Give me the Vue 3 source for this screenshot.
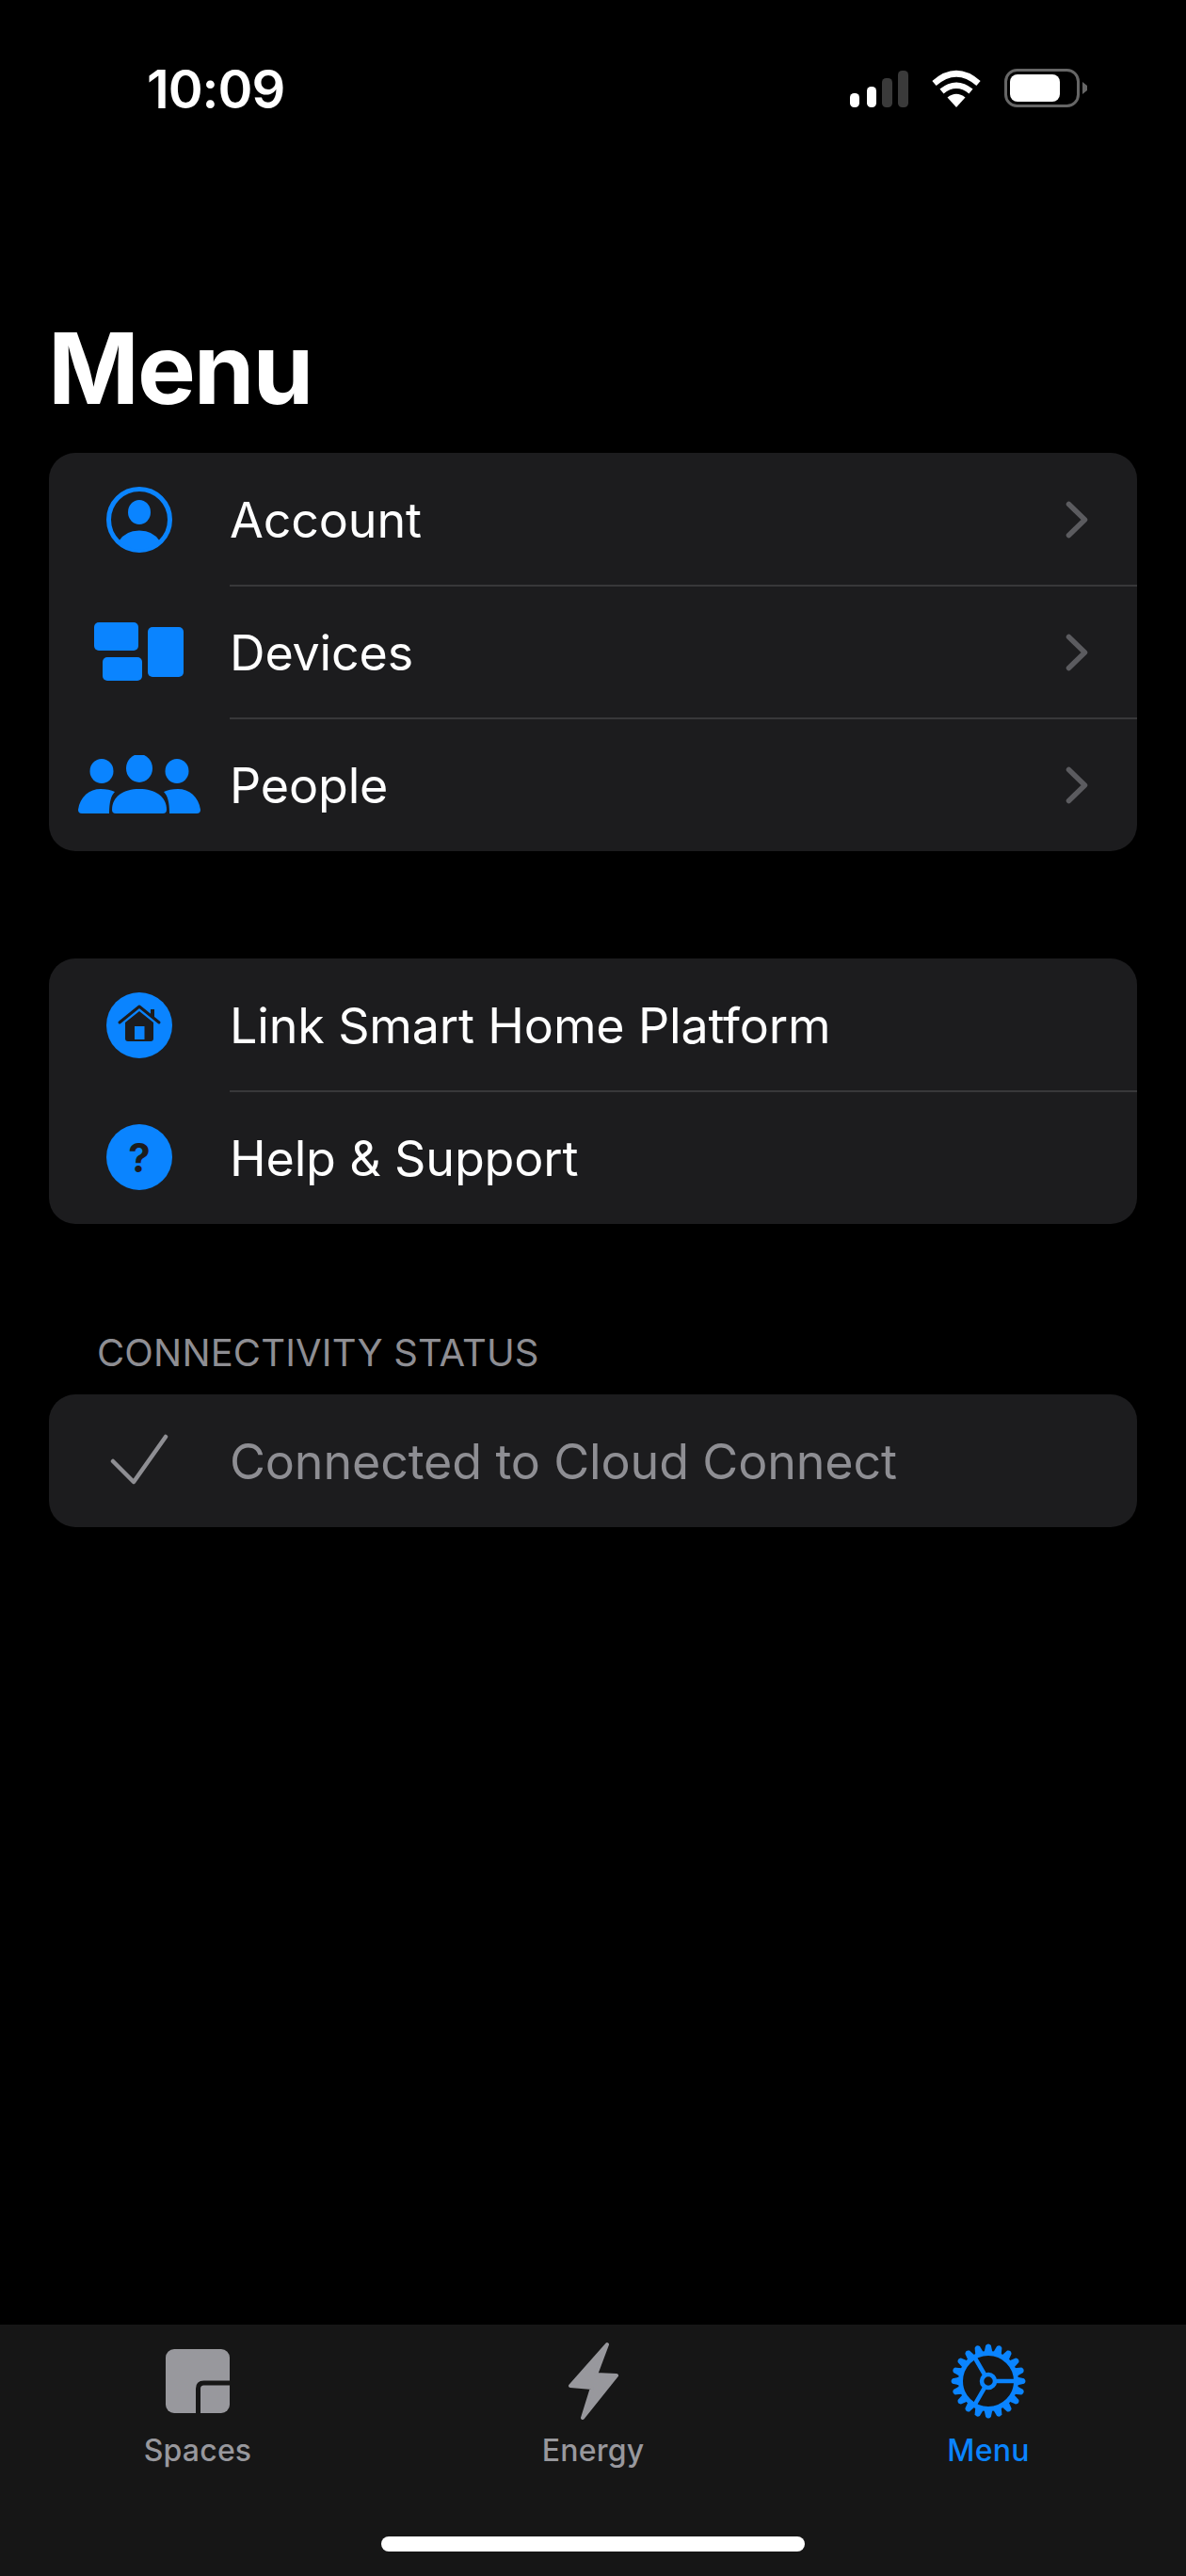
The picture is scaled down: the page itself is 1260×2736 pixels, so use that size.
<script setup>
const accountRows = [
  { key: 'account', label: 'Account' },
  { key: 'devices', label: 'Devices' },
  { key: 'people', label: 'People' },
]

const supportRows = [
  { key: 'home', label: 'Link Smart Home Platform' },
  { key: 'help', label: 'Help & Support' },
]

const tabs = [
  { key: 'spaces', label: 'Spaces' },
  { key: 'energy', label: 'Energy' },
  { key: 'menu', label: 'Menu', active: true },
]
</script>

<template>
  <div class="screen">
    <header class="status-bar">
      <span class="status-bar__time">10:09</span>
      <div class="status-bar__icons">
        <svg class="signal" width="62" height="39" viewBox="0 0 62 39" aria-hidden="true">
          <rect x="0" y="24" width="10" height="15" rx="4.5" fill="#fff" />
          <rect x="18" y="17" width="10" height="22" rx="4.5" fill="#fff" />
          <rect x="34" y="8" width="11" height="31" rx="4.5" fill="#3a3a3a" />
          <rect x="51" y="0" width="11" height="39" rx="4.5" fill="#3a3a3a" />
        </svg>
        <svg class="wifi" width="54" height="40" viewBox="0 0 54 40" aria-hidden="true">
          <path d="M27 40 L17.5 29.5 Q27 22 36.5 29.5 Z" fill="#fff" />
          <path d="M11.5 23 Q27 10.5 42.5 23" fill="none" stroke="#fff" stroke-width="6.5" />
          <path d="M3.5 14.5 Q27 -6 50.5 14.5" fill="none" stroke="#fff" stroke-width="6.5" />
        </svg>
        <svg class="battery" width="89" height="41" viewBox="0 0 89 41" aria-hidden="true">
          <rect x="1.5" y="1.5" width="77" height="38" rx="12" fill="none" stroke="#666" stroke-width="3" />
          <rect x="6" y="6" width="53" height="29" rx="8" fill="#fff" />
          <path d="M83 14 L88 18 V23 L83 27 Z" fill="#666" />
        </svg>
      </div>
    </header>

    <main class="content">
      <h1 class="content__title">Menu</h1>

      <ul class="card">
        <li v-for="row in accountRows" :key="row.key" class="row">
          <span class="row__icon">
            <svg v-if="row.key === 'account'" width="70" height="70" viewBox="0 0 70 70" aria-hidden="true">
              <circle cx="35" cy="35" r="32.5" fill="none" stroke="#0a84ff" stroke-width="5" />
              <ellipse cx="35" cy="27" rx="12" ry="13" fill="#0a84ff" />
              <path d="M13 58 Q20 46.5 35 46.5 Q50 46.5 57 58 A32.5 32.5 0 0 1 13 58 Z" fill="#0a84ff" />
            </svg>
            <svg v-else-if="row.key === 'devices'" width="96" height="62" viewBox="0 0 96 62" aria-hidden="true">
              <rect x="0" y="0" width="47" height="30" rx="5" fill="#0a84ff" />
              <rect x="9" y="37" width="42" height="25" rx="5" fill="#0a84ff" />
              <rect x="57" y="5" width="38" height="53" rx="5" fill="#0a84ff" />
            </svg>
            <svg v-else width="130" height="62" viewBox="0 0 130 62" aria-hidden="true">
              <ellipse cx="25" cy="17" rx="12.5" ry="13" fill="#0a84ff" />
              <ellipse cx="105" cy="17" rx="12.5" ry="13" fill="#0a84ff" />
              <ellipse cx="65" cy="14" rx="14" ry="15" fill="#0a84ff" />
              <path d="M0 58 C2 44 12 36 24 36 Q33 36 39 39 C35 43 33 50 33 62 H4 Q0 62 0 58 Z" fill="#0a84ff" />
              <path d="M130 58 C128 44 118 36 106 36 Q97 36 91 39 C95 43 97 50 97 62 H126 Q130 62 130 58 Z" fill="#0a84ff" />
              <path d="M36 58 C36 44 48 36 65 36 C82 36 94 44 94 58 Q94 62 90 62 H40 Q36 62 36 58 Z" fill="#0a84ff" />
            </svg>
          </span>
          <span class="row__body">
            <span class="row__label">{{ row.label }}</span>
            <svg class="row__chevron" width="24" height="40" viewBox="0 0 24 40" aria-hidden="true">
              <path d="M3.5 3.5 L20.5 20 L3.5 36.5" fill="none" stroke="#5b5b5f" stroke-width="5.5" stroke-linecap="round" stroke-linejoin="round" />
            </svg>
          </span>
        </li>
      </ul>

      <ul class="card card--support">
        <li v-for="row in supportRows" :key="row.key" class="row">
          <span class="row__icon">
            <span v-if="row.key === 'help'" class="help-badge">?</span>
            <svg v-else width="70" height="70" viewBox="13 13 70 70" aria-hidden="true">
              <circle cx="48" cy="48" r="35" fill="#0a84ff" />
              <path d="M33 45 L48 33 L63 45 V62 Q63 65 60 65 H36 Q33 65 33 62 Z" fill="#1c1c1e" />
              <path d="M27 45 L48 28 L69 45" fill="none" stroke="#1c1c1e" stroke-width="3" stroke-linecap="round" stroke-linejoin="round" />
              <rect x="60" y="31" width="4" height="9" fill="#1c1c1e" />
              <rect x="43" y="49" width="10.5" height="14" fill="#0a84ff" />
            </svg>
          </span>
          <span class="row__body">
            <span class="row__label">{{ row.label }}</span>
          </span>
        </li>
      </ul>

      <h2 class="section-label">CONNECTIVITY STATUS</h2>
      <div class="card">
        <div class="row row--status">
          <span class="row__icon">
            <svg width="62" height="60" viewBox="0 0 62 60" aria-hidden="true">
              <path d="M3 30 L25 52 L59 4" fill="none" stroke="#8e8e93" stroke-width="4.5" stroke-linecap="round" stroke-linejoin="round" />
            </svg>
          </span>
          <span class="row__body">
            <span class="row__label row__label--muted">Connected to Cloud Connect</span>
          </span>
        </div>
      </div>
    </main>

    <nav class="tabs">
      <div
        v-for="tab in tabs"
        :key="tab.key"
        class="tabs__item"
        :class="{ 'tabs__item--active': tab.active }"
      >
        <span class="tabs__icon">
          <svg v-if="tab.key === 'spaces'" width="68" height="68" viewBox="0 0 68 68" aria-hidden="true">
            <rect width="68" height="68" rx="9" fill="#98989d" />
            <path d="M34.5 68 V42 Q34.5 36 40.5 36 H68" fill="none" stroke="#161616" stroke-width="5" />
          </svg>
          <svg v-else-if="tab.key === 'energy'" width="56" height="84" viewBox="0 0 56 84" aria-hidden="true">
            <path d="M43 3 L4 47 L27 49 L17 81 L53 36 L31 35 Z" fill="#98989d" stroke="#98989d" stroke-width="4" stroke-linejoin="round" />
          </svg>
          <svg v-else width="84" height="84" viewBox="-42 -42 84 84" aria-hidden="true">
            <path
              v-for="n in 20"
              :key="n"
              d="M28 -5 L38 -2.8 Q41 0 38 2.8 L28 5 Z"
              fill="#0a84ff"
              :transform="`rotate(${n * 18})`"
            />
            <circle r="29.5" fill="none" stroke="#0a84ff" stroke-width="5" />
            <circle r="7" fill="none" stroke="#0a84ff" stroke-width="4.5" />
            <path d="M8 0 H30 M-4 -7 L-15 -26 M-4 7 L-15 26" fill="none" stroke="#0a84ff" stroke-width="4.5" />
          </svg>
        </span>
        <span class="tabs__label">{{ tab.label }}</span>
      </div>
      <span class="tabs__home-bar"></span>
    </nav>
  </div>
</template>

<style scoped>
.screen {
  display: flex;
  flex-direction: column;
  width: 1260px;
  height: 2736px;
  background: #000;
  color: #fff;
  font-family: Inter, "Liberation Sans", sans-serif;
  overflow: hidden;
}

.status-bar {
  display: flex;
  align-items: flex-start;
  justify-content: space-between;
  height: 140px;
  flex-shrink: 0;
  box-sizing: border-box;
  padding: 65px 104px 0 156px;
}

.status-bar__time {
  font-size: 56px;
  line-height: 60px;
  font-weight: 600;
  letter-spacing: -1px;
}

.status-bar__icons {
  display: flex;
  align-items: flex-end;
  gap: 24px;
  padding-top: 8px;
}

.content {
  flex: 1;
  padding: 0 52px;
}

.content__title {
  height: 150px;
  margin: 191px 0 0 -1px;
  font-size: 104px;
  line-height: 120px;
  font-weight: 700;
  letter-spacing: -2px;
}

.card {
  margin: 0;
  padding: 0;
  list-style: none;
  background: #1c1c1e;
  border-radius: 28px;
  overflow: hidden;
}

.card--support {
  margin-top: 114px;
}

.section-label {
  height: 69px;
  margin: 112px 0 0 0;
  padding-left: 51px;
  font-size: 40px;
  line-height: 50px;
  font-weight: 400;
  letter-spacing: 0.15px;
  color: #8e8e93;
}

.row {
  display: flex;
  height: 141px;
}

.row + .row {
  height: 142px;
  margin-top: -1px;
}

.row__icon {
  display: flex;
  align-items: center;
  justify-content: center;
  width: 192px;
  flex-shrink: 0;
}

.row__body {
  display: flex;
  align-items: center;
  justify-content: space-between;
  flex: 1;
  box-sizing: border-box;
  padding-right: 52px;
}

.row + .row .row__body {
  border-top: 2px solid #38383a;
}

.row__label {
  position: relative;
  top: 1px;
  font-size: 52px;
  line-height: 60px;
  letter-spacing: -0.15px;
}

.row__label--muted {
  color: #8e8e93;
}

.help-badge {
  display: flex;
  align-items: center;
  justify-content: center;
  width: 70px;
  height: 70px;
  border-radius: 50%;
  background: #0a84ff;
  color: #1c1c1e;
  font-size: 42px;
  font-weight: 700;
}

.tabs {
  position: relative;
  display: grid;
  grid-template-columns: repeat(3, 1fr);
  height: 267px;
  flex-shrink: 0;
  background: #161616;
}

.tabs__item {
  display: flex;
  flex-direction: column;
  align-items: center;
  color: #98989d;
}

.tabs__item--active {
  color: #0a84ff;
}

.tabs__icon {
  display: flex;
  align-items: center;
  justify-content: center;
  height: 84px;
  margin-top: 18px;
}

.tabs__label {
  margin-top: 12px;
  font-size: 32px;
  line-height: 40px;
  font-weight: 500;
  letter-spacing: 0.2px;
}

.tabs__home-bar {
  position: absolute;
  left: 405px;
  bottom: 26px;
  width: 450px;
  height: 16px;
  border-radius: 8px;
  background: #fff;
}
</style>

<style>
html,
body {
  background: #000;
}
</style>
